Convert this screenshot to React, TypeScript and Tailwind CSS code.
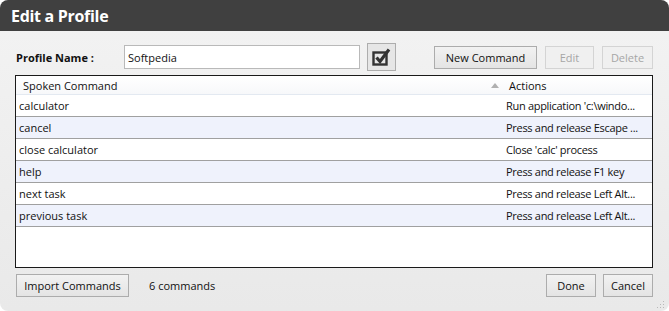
import React from "react";

const rows = [
  { cmd: "calculator", action: "Run application 'c:\\windo..." },
  { cmd: "cancel", action: "Press and release Escape ..." },
  { cmd: "close calculator", action: "Close 'calc' process" },
  { cmd: "help", action: "Press and release F1 key" },
  { cmd: "next task", action: "Press and release Left Alt..." },
  { cmd: "previous task", action: "Press and release Left Alt..." },
];

function Button({ children, disabled, className = "" }: { children: React.ReactNode; disabled?: boolean; className?: string }) {
  return (
    <button
      className={
        disabled
          ? `h-[23px] border border-[#d4d4d4] bg-[#f0f0f0] text-[#a6a6a6] ${className}`
          : `h-[23px] border border-[#acacac] bg-gradient-to-b from-[#f2f2f2] to-[#e4e4e4] text-[#111] ${className}`
      }
    >
      {children}
    </button>
  );
}

export default function App() {
  return (
    <div
      className="w-[669px] h-[311px] bg-white text-[11px] leading-none"
      style={{ fontFamily: '"Open Sans", "Noto Sans", sans-serif' }}
    >
      <div className="h-full flex flex-col rounded-[8px] overflow-hidden">
        {/* Title bar */}
        <div className="h-[31px] bg-[#404040] flex items-center px-[11px] shrink-0">
          <span className="text-white font-bold text-[16px] tracking-[-0.3px]">Edit a Profile</span>
        </div>

        {/* Body */}
        <div className="flex-1 flex flex-col bg-gradient-to-b from-[#f2f2f2] to-[#e9e9e9] pl-[15px] pr-[16px] pt-[12px] relative">
          {/* Profile name row */}
          <div className="flex items-center h-[28px]">
            <span className="w-[109px] pl-[1px] font-bold text-[#111]">Profile Name :</span>
            <div className="w-[236px] h-[24px] bg-white border border-[#b9b9b9] flex items-center pl-[3px] text-[#111]">
              Softpedia
            </div>
            <button className="ml-[7px] w-[29px] h-[28px] border border-[#adadad] bg-[#e6e6e6] flex items-center justify-center">
              <svg width="20" height="18" viewBox="0 0 20 18">
                <rect x="1.5" y="4.5" width="13" height="12" fill="none" stroke="#333" strokeWidth="2.4" />
                <path d="M4.5 9.5 L8 13.5 L17 1.5" fill="none" stroke="#333" strokeWidth="3.2" strokeLinejoin="miter" />
              </svg>
            </button>
            <div className="ml-auto flex gap-[8px]">
              <Button className="w-[103px]">New Command</Button>
              <Button disabled className="w-[49px]">Edit</Button>
              <Button disabled className="w-[51px]">Delete</Button>
            </div>
          </div>

          {/* Table */}
          <div className="mt-[4px] h-[193px] border border-[#1a1a1a] bg-white text-[#111] flex flex-col">
            <div className="h-[19px] grid grid-cols-[474px_1fr] items-center border-b border-[#e3e9f1] bg-gradient-to-b from-white to-[#f7f8fa]">
              <span className="pl-[7px]">Spoken Command</span>
              <span className="flex items-center">
                <svg width="8" height="5" viewBox="0 0 8 5" className="ml-[1px] mr-[10px]">
                  <path d="M0 5 L4 0 L8 5 Z" fill="#b0b0b0" />
                </svg>
                Actions
              </span>
            </div>
            {rows.map((r, i) => (
              <div
                key={r.cmd}
                className={`h-[22px] grid grid-cols-[490px_1fr] items-center border-b border-[#a0a0a0] ${i % 2 ? "bg-[#eff2fc]" : "bg-white"}`}
              >
                <span className="pl-[3px] whitespace-nowrap">{r.cmd}</span>
                <span className="whitespace-nowrap tracking-[-0.3px]">{r.action}</span>
              </div>
            ))}
          </div>

          {/* Bottom row */}
          <div className="mt-[6px] flex items-center">
            <Button className="w-[113px] ml-[1px]">Import Commands</Button>
            <span className="ml-[20px] text-[#111]">6 commands</span>
            <div className="ml-auto flex gap-[7px]">
              <Button className="w-[50px]">Done</Button>
              <Button className="w-[50px]">Cancel</Button>
            </div>
          </div>

          {/* Resize grip */}
          <svg width="10" height="10" viewBox="0 0 10 10" className="absolute right-[4px] bottom-[2px]">
            {[
              [8, 2],
              [5, 5],
              [8, 5],
              [2, 8],
              [5, 8],
              [8, 8],
            ].map(([x, y]) => (
              <rect key={`${x}-${y}`} x={x} y={y} width="1" height="1" fill="#b8b8b8" />
            ))}
          </svg>
        </div>
      </div>
    </div>
  );
}
